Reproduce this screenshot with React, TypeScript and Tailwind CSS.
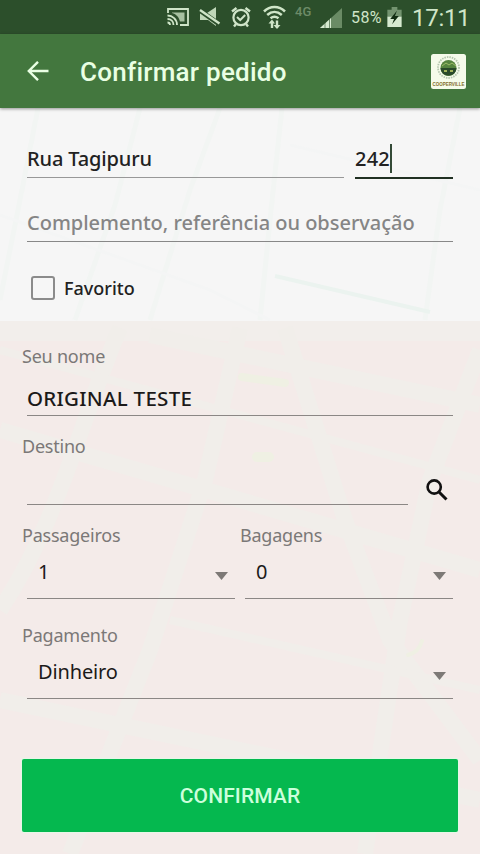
import type { ReactNode } from "react";

const NOTO = "font-['Noto_Sans','Open_Sans',sans-serif]";
const ROBOTO = "font-[Roboto,sans-serif]";

function StatusBar() {
  return (
    <div className={`flex h-[34px] shrink-0 items-center bg-[#2c4f2b] pl-[167px] text-[#cfe5c8] ${ROBOTO}`}>
      <svg className="shrink-0" width="22" height="18" viewBox="0 0 22 18" fill="none" stroke="currentColor" strokeWidth="1.8">
        <path d="M1 5V1h20v16h-8" />
        <path d="M5 4.5h12.5v9H13C12 9 9 6 5 5z" fill="currentColor" stroke="none" opacity=".75" />
        <path d="M.5 7.500c5 0 9.500 4 9.500 9.500M.5 11c3.500 0 6 2.500 6 6M.5 14.500c1.500 0 2.500 1 2.500 2.500" />
      </svg>
      <svg className="ml-[10px] shrink-0" width="22" height="20" viewBox="0 0 22 20">
        <path d="M1 6h7l9-6v19l-8-6H1z" fill="currentColor" opacity=".9" />
        <path d="M-.5 2.500 20 17" stroke="#2c4f2b" strokeWidth="4.600" />
        <path d="M1 3 20.500 16.500" stroke="currentColor" strokeWidth="2.400" />
      </svg>
      <svg className="ml-[10px] shrink-0" width="20" height="22" viewBox="0 0 20 22" fill="none" stroke="currentColor">
        <circle cx="10" cy="11.500" r="7.600" strokeWidth="2.200" />
        <path d="M1 5.500 5.500 2M19 5.500 14.500 2M5 18l-2 2.500M15 18l2 2.500" strokeWidth="2.400" />
        <path d="m6 11 3.200 3 5-5" strokeWidth="2" />
      </svg>
      <svg className="ml-[12px] shrink-0" width="23" height="24" viewBox="0 0 23 24" fill="none" stroke="currentColor">
        <path d="M1 6.500C7 .5 16 .5 22 6.500M4.200 10c4.500-4 10-4 14.600 0M7.500 13.300c2.500-2 5.500-2 8 0" strokeWidth="2.500" />
        <path d="M9 23v-7M14 15.500v7" strokeWidth="2.400" />
        <path d="m5.500 18.500 3.500-4 3 4zM10.500 20l3.500 4 3.500-4z" fill="currentColor" stroke="none" />
      </svg>
      <span className="mb-[11px] ml-[9px] w-[18px] shrink-0 text-[13px] font-medium leading-none tracking-[0.2px] text-[#6d8b68]">4G</span>
      <svg className="ml-[7px] mt-px shrink-0" width="22" height="20" viewBox="0 0 22 20">
        <path d="M0 20 22 0v20z" fill="#6a8b65" />
        <path d="M0 20 11 10v10z" fill="#d6ead0" />
        <path d="M5 12v8M9.500 8v12" stroke="#2c4f2b" strokeWidth="1" opacity=".6" />
      </svg>
      <span className="ml-[9px] mt-[2px] w-[33px] shrink-0 whitespace-nowrap text-[16px] leading-none tracking-[0.4px]">58%</span>
      <svg className="ml-[3px] shrink-0" width="15" height="20" viewBox="0 0 15 21">
        <path d="M0 3h4.500V0h6v3H15v7H0z" fill="#749470" />
        <path d="M0 10h15v11H0z" fill="#d6ead0" />
        <path d="M10 4 3 12.500h4L5 18l7-8.500H8z" fill="#112d12" />
      </svg>
      <span className="ml-[10px] mt-[2px] whitespace-nowrap text-[24px] leading-none tracking-[-0.3px]">17:11</span>
    </div>
  );
}

function CompanyLogo() {
  return (
    <svg className="ml-auto shrink-0 overflow-visible" width="35" height="35" viewBox="0 0 35 35">
      <rect width="35" height="35" rx="2.500" fill="#f5fbea" />
      <circle cx="17.500" cy="13.500" r="10.500" fill="none" stroke="#b5c6ae" strokeWidth="1.800" strokeDasharray="1.500 1" />
      <circle cx="17.500" cy="14" r="8" fill="#55843f" />
      <path d="M9.500 14h16c-.5 10-15.500 10-16 0" fill="#29492a" />
      <path d="m11 12 4-3 3 2 3-2 4 3" fill="none" stroke="#9dbd68" />
      <path d="M13 17h3M19 17h3" stroke="#c7d66b" strokeWidth="1.500" />
      <text x="17.500" y="32" textAnchor="middle" textLength="32" lengthAdjust="spacingAndGlyphs" fontFamily="Liberation Sans, sans-serif" fontSize="5.500" fontWeight="700" fill="#846f29">COOPERVILLE</text>
    </svg>
  );
}

function MapBackdrop() {
  return (
    <svg className="absolute inset-0 -z-10" width="480" height="746" viewBox="0 108 480 746" fill="none">
      <rect y="108" width="480" height="213" fill="#f6f6f6" />
      <rect y="321" width="480" height="533" fill="#f4ebe9" />
      <rect y="321" width="480" height="20" fill="#f2eeeb" />
      <g stroke="#f1eeea" strokeWidth="16">
        <path d="M0 610C60 520 80 420 120 328M70 854 150 650 205 480 240 328M0 430 480 570M150 335 480 405M285 328 345 520 390 640 480 760M480 350 430 480 400 620 365 854M0 700 480 800" />
        <path d="M0 350 480 480M170 620 480 690" strokeWidth="8" />
      </g>
      <g stroke="#f2f5f3" strokeWidth="5">
        <path d="M0 300 20 200 38 108M75 320 115 205 140 108M150 320 190 190 220 108M260 320 270 220 282 108M425 320 440 210 460 108" />
        <path d="M275 276 430 312" stroke="#ebf3ef" strokeWidth="4" />
        <path d="M0 215 210 290 270 320M290 145 480 190" stroke="#f4f5f5" strokeWidth="3" />
      </g>
      <g stroke="#eff0e3" strokeLinecap="round">
        <path d="M242 377 285 383" strokeWidth="8" />
        <path d="M257 457h12" strokeWidth="10" />
        <path d="M408 655c8-2 12-7 14-14" strokeWidth="4" />
      </g>
    </svg>
  );
}

function Caret({ className = "" }: { className?: string }) {
  return (
    <svg className={`shrink-0 ${className}`} width="13" height="8" viewBox="0 0 13 8">
      <path d="M0 0h13L6.500 8z" fill="#7d7976" />
    </svg>
  );
}

function Label({ children }: { children: ReactNode }) {
  return <div className="text-[18px] leading-6 tracking-[-0.22px] text-[#7b7877]">{children}</div>;
}

function Select({ label, value }: { label: string; value: string }) {
  return (
    <div className="flex-1">
      <Label>{label}</Label>
      <div className="ml-[5px] mr-[5px] flex h-[52px] justify-between border-b border-[#8b8785] pl-[11px] pr-[7px] pt-[13px]">
        <span className="text-[20px] leading-6 tracking-[-0.15px] text-[#1c1a19]">{value}</span>
        <Caret className="mt-[12px]" />
      </div>
    </div>
  );
}

export default function App() {
  return (
    <div className={`flex h-[854px] w-[480px] flex-col overflow-hidden bg-[#f5ebe9] ${NOTO}`}>
      <StatusBar />
      <header className={`z-10 flex h-[74px] shrink-0 items-center bg-[#43773e] pl-[27px] pr-[14px] text-[#e9ffe3] shadow-[0_1px_3px_rgba(0,0,0,0.4)] ${ROBOTO}`}>
        <svg width="22" height="20" viewBox="0 0 22 20" fill="none" stroke="currentColor" strokeWidth="2.400">
          <path d="M21.500 10H2M11 .8 1.800 10l9.200 9.200" />
        </svg>
        <h1 className="ml-[31px] mt-[2px] text-[26px] font-medium leading-none tracking-[0.25px]">Confirmar pedido</h1>
        <CompanyLogo />
      </header>

      <main className="relative isolate flex h-[746px] flex-col">
        <MapBackdrop />
        <section className="h-[213px] pl-[27px] pr-[27px] pt-[39px] font-medium">
          <div className="flex gap-[11px]">
            <div className="h-[31px] w-[317px] border-b border-[#989898] text-[20px] leading-6 tracking-[-0.15px] text-[#222]">Rua Tagipuru</div>
            <div className="flex h-[32px] flex-1 border-b-2 border-[#203022] text-[20px] leading-6 text-[#222]">
              <span className="tracking-[0.2px]">242</span>
              <span className="-mt-[3px] h-[29px] w-[2px] bg-[#344a37]" />
            </div>
          </div>
          <div className="mt-[32px] h-[31px] border-b border-[#888] text-[20px] leading-6 tracking-[-0.02px] text-[#858585]">
            Complemento, referência ou observação
          </div>
          <label className="mt-[34px] flex items-center pl-[4px]">
            <span className="-mt-px size-6 rounded-[3px] border-2 border-[#8b8b8b]" />
            <span className="ml-[9px] text-[18px] leading-6 text-[#222]">Favorito</span>
          </label>
        </section>

        <section className="flex h-[533px] flex-col px-[22px] pt-[23px]">
          <Label>Seu nome</Label>
          <div className="ml-[5px] mr-[5px] mt-[18px] h-[30px] border-b border-[#8b8785] text-[20.5px] font-medium leading-6 tracking-[0.28px] text-[#1c1a19]">
            ORIGINAL TESTE
          </div>
          <div className="mt-[18px]">
            <Label>Destino</Label>
          </div>
          <div className="flex h-[47px] pl-[5px]">
            <div className="w-[381px] border-b border-[#8b8785]" />
            <svg className="ml-[18px] mt-[21px]" width="22" height="22" viewBox="0 0 22 22" fill="none" stroke="#111">
              <circle cx="8.200" cy="8" r="6.600" strokeWidth="2.600" />
              <path d="m13 13 7.500 7.500" strokeWidth="3" />
            </svg>
          </div>
          <div className="mt-[18px] flex">
            <Select label="Passageiros" value="1" />
            <Select label="Bagagens" value="0" />
          </div>
          <div className="mt-[24px] flex">
            <Select label="Pagamento" value="Dinheiro" />
          </div>
          <button className={`mt-[60px] h-[73px] shrink-0 rounded-[2px] bg-[#05b84f] pt-[2px] text-[21px] font-medium tracking-[0.1px] text-[#ccffdc] shadow-[0_0_0_1px_rgba(220,255,230,0.6)] ${ROBOTO}`}>
            CONFIRMAR
          </button>
        </section>
      </main>
    </div>
  );
}
